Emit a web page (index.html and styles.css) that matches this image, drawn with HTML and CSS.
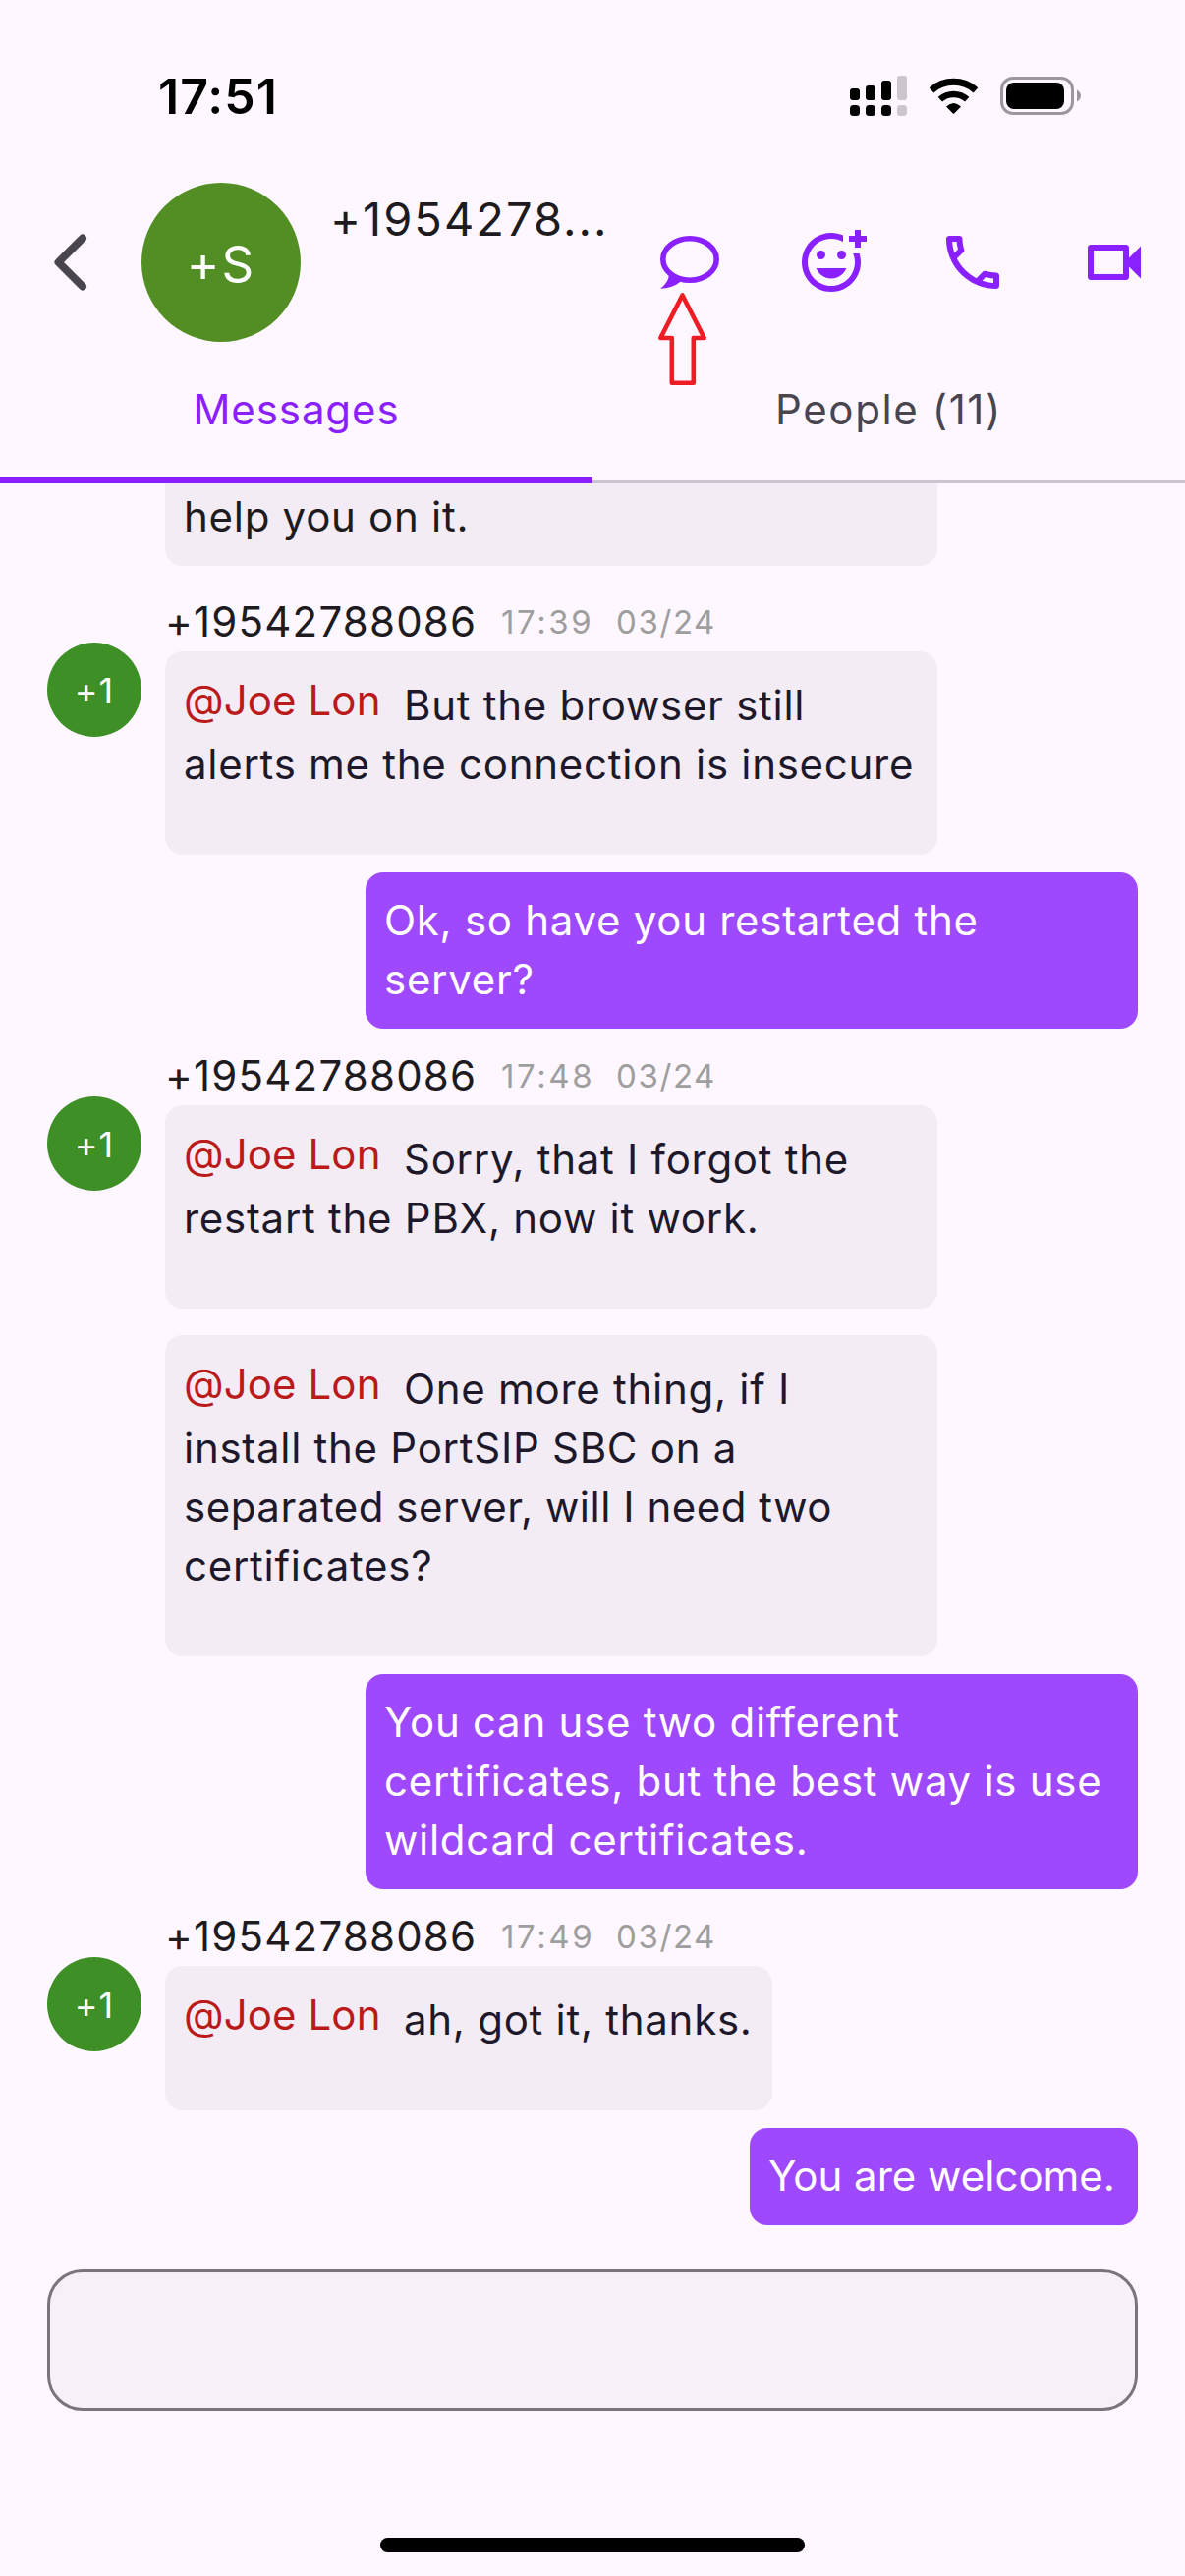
FILE: index.html
```html
<!DOCTYPE html>
<html lang="en">
<head>
<meta charset="utf-8">
<title>Messages</title>
<link rel="stylesheet" href="styles.css">
</head>
<body>
<div class="screen">
  <div class="status-bar">
    <span class="clock">17:51</span>
    <svg class="status-icons" width="236" height="42" viewBox="0 0 236 42">
      <g fill="#000">
        <rect x="0" y="14" width="10" height="12" rx="3"/>
        <rect x="16" y="11" width="10" height="15" rx="3"/>
        <rect x="32" y="6" width="10" height="20" rx="3"/>
        <rect x="0" y="31" width="10" height="11" rx="3.5"/>
        <rect x="16" y="31" width="10" height="11" rx="3.5"/>
        <rect x="32" y="31" width="10" height="11" rx="3.5"/>
      </g>
      <g fill="#cbc5cc">
        <rect x="48" y="1" width="10" height="25" rx="3"/>
        <rect x="48" y="31" width="10" height="11" rx="3.5"/>
      </g>
      <g fill="none" stroke="#000" stroke-width="7">
        <path d="M83 15.800A34 34 0 0 1 128 15.800"/>
        <path d="M91.800 25.200A20.500 20.500 0 0 1 119.200 25.200" stroke-width="6.500"/>
      </g>
      <path d="M98 32.500Q105.500 25.500 113 32.500L106.200 39.400Q105.500 40 104.800 39.400Z"/>
      <rect x="154.500" y="3.500" width="72" height="36" rx="11.500" fill="none" stroke="#9c969e" stroke-width="3"/>
      <rect x="159" y="8" width="59" height="27" rx="8"/>
      <path d="M231 15.500Q235 18 235 21.500T231 27.500Z" fill="#9c969e"/>
    </svg>
  </div>

  <header class="header">
    <svg class="back" width="36" height="60" viewBox="0 0 36 60"><path d="M31 5.500L6.500 30L31 54.500" fill="none" stroke="#49454f" stroke-width="8" stroke-linecap="round" stroke-linejoin="round"/></svg>
    <div class="avatar avatar-lg">+S</div>
    <div class="title">+1954278...</div>
    <div class="actions">
      <div class="action">
        <svg width="72" height="72" viewBox="0 0 72 72"><ellipse cx="36" cy="33" rx="27.200" ry="21.200" fill="none" stroke="#8a20ff" stroke-width="5.600"/><path d="M15 49Q14 57 6 62.800Q18 62.500 27 55.500Z" fill="#8a20ff"/></svg>
        <svg class="pointer" width="53" height="98" viewBox="0 0 53 98"><path d="M26.500 3.500L4.300 47H15.800V92.800H37.800V47H48.700Z" fill="none" stroke="#ee1c24" stroke-width="4.600" stroke-linejoin="round"/></svg>
      </div>
      <svg width="72" height="72" viewBox="0 0 24 24"><path fill="#8a20ff" d="M7 9.500C7 8.670 7.670 8 8.500 8S10 8.670 10 9.500 9.330 11 8.500 11 7 10.330 7 9.500zm5 8c2.330 0 4.310-1.460 5.110-3.500H6.890c.8 2.040 2.780 3.500 5.110 3.500zM15.500 11c.83 0 1.500-.67 1.500-1.500S16.330 8 15.500 8 14 8.670 14 9.500s.67 1.500 1.500 1.500zM22 1h-2v2h-2v2h2v2h2V5h2V3h-2V1zm-2 11c0 4.420-3.580 8-8 8s-8-3.580-8-8 3.580-8 8-8c1.460 0 2.820.4 4 1.080V2.840C14.770 2.300 13.420 2 11.990 2 6.470 2 2 6.480 2 12s4.470 10 9.990 10C17.520 22 22 17.520 22 12c0-1.050-.17-2.050-.47-3h-2.130c.38.93.6 1.940.6 3z"/></svg>
      <svg width="72" height="72" viewBox="0 0 24 24"><path fill="#8a20ff" d="M6.540 5c.06.89.21 1.760.45 2.590l-1.200 1.200c-.41-1.200-.67-2.470-.76-3.790h1.510m9.860 12.020c.85.24 1.720.39 2.600.45v1.490c-1.320-.09-2.590-.35-3.800-.75l1.200-1.190M7.500 3H4c-.55 0-1 .45-1 1 0 9.390 7.610 17 17 17 .55 0 1-.45 1-1v-3.490c0-.55-.45-1-1-1-1.240 0-2.450-.2-3.570-.57-.1-.04-.21-.05-.31-.05-.26 0-.51.1-.71.29l-2.200 2.200c-2.830-1.450-5.150-3.760-6.590-6.590l2.200-2.200c.28-.28.36-.67.25-1.020C8.700 6.450 8.500 5.250 8.500 4c0-.55-.45-1-1-1z"/></svg>
      <svg width="72" height="72" viewBox="0 0 24 24"><path fill="#8a20ff" d="M15 8v8H5V8h10m1-2H4c-.55 0-1 .45-1 1v10c0 .55.45 1 1 1h12c.55 0 1-.45 1-1v-3.500l4 4v-11l-4 4V7c0-.55-.45-1-1-1z"/></svg>
    </div>
  </header>

  <nav class="tabs">
    <div class="tab active">Messages</div>
    <div class="tab">People (11)</div>
  </nav>

  <main class="chat">
    <div class="row first"><div class="bubble in wide">help you on it.</div></div>

    <div class="row group opening">
      <div class="avatar avatar-sm">+1</div>
      <div class="stack">
        <div class="meta"><span class="sender">+19542788086</span><span class="time">17:39</span><span class="date">03/24</span></div>
        <div class="bubble in wide"><span class="mention">@Joe Lon</span>But the browser still<br>alerts me the connection is insecure</div>
      </div>
    </div>

    <div class="row sent"><div class="bubble out wide">Ok, so have you restarted the<br>server?</div></div>

    <div class="row group">
      <div class="avatar avatar-sm">+1</div>
      <div class="stack">
        <div class="meta"><span class="sender">+19542788086</span><span class="time">17:48</span><span class="date">03/24</span></div>
        <div class="bubble in wide"><span class="mention">@Joe Lon</span>Sorry, that I forgot the<br>restart the PBX, now it work.</div>
        <div class="bubble in wide next"><span class="mention">@Joe Lon</span>One more thing, if I<br>install the PortSIP SBC on a<br><span class="tight">separated server, will I need two</span><br>certificates?</div>
      </div>
    </div>

    <div class="row sent"><div class="bubble out wide">You can use two different<br>certificates, but the best way is use<br>wildcard certificates.</div></div>

    <div class="row group">
      <div class="avatar avatar-sm">+1</div>
      <div class="stack">
        <div class="meta"><span class="sender">+19542788086</span><span class="time">17:49</span><span class="date">03/24</span></div>
        <div class="bubble in short"><span class="mention">@Joe Lon</span>ah, got it, thanks.</div>
      </div>
    </div>

    <div class="row sent"><div class="bubble out brief">You are welcome.</div></div>
  </main>

  <div class="composer"></div>
  <div class="home-indicator"></div>
</div>
</body>
</html>
```
FILE: styles.css
```css
* { box-sizing: border-box; }

body {
  margin: 0;
  background: #fef7ff;
  font-family: Inter, "Liberation Sans", sans-serif;
  color: #1d1b20;
}

svg { display: block; flex: none; }

.screen {
  width: 1206px;
  height: 2622px;
  display: flex;
  flex-direction: column;
  overflow: hidden;
}

.status-bar {
  height: 186px;
  flex: none;
  display: flex;
  justify-content: space-between;
  align-items: flex-start;
  padding: 68px 105px 0 161px;
}

.clock {
  font-size: 50px;
  line-height: 60px;
  font-weight: 600;
  color: #000;
  letter-spacing: 1px;
}

.status-icons { margin-top: 8px; }

.header {
  height: 162px;
  flex: none;
  display: flex;
  align-items: center;
  padding: 0 36px 0 53px;
}

.avatar {
  flex: none;
  border-radius: 50%;
  color: #fff;
  display: flex;
  align-items: center;
  justify-content: center;
}

.avatar-lg {
  width: 162px;
  height: 162px;
  margin-left: 55px;
  padding-top: 2px;
  background: #528e23;
  font-size: 51px;
  letter-spacing: 2px;
}

.title {
  align-self: flex-start;
  margin: 8px 0 0 30px;
  width: 300px;
  font-size: 47px;
  line-height: 58px;
  letter-spacing: 2px;
  white-space: nowrap;
}

.actions {
  margin-left: auto;
  display: flex;
  gap: 72px;
}

.action { position: relative; }

.pointer {
  position: absolute;
  left: 2px;
  top: 66px;
}

.tabs {
  height: 144px;
  flex: none;
  display: flex;
}

.tab {
  flex: 1;
  text-align: center;
  padding-top: 44px;
  font-size: 42px;
  line-height: 50px;
  letter-spacing: 1.6px;
  color: #49454f;
  border-bottom: 3px solid #cac4d0;
}

.tab.active {
  color: #8a20ff;
  letter-spacing: 0.9px;
  border-bottom: 6px solid #8a20ff;
}

.chat {
  flex: none;
  height: 1818px;
  padding: 0 48px;
  font-size: 42px;
  line-height: 60px;
}

.row { display: flex; }

.row.first { padding-left: 120px; }

.row.first .bubble {
  height: 84px;
  padding-top: 4px;
  border-radius: 0 0 18px 18px;
  color: #1d1b20;
}

.row.group {
  gap: 24px;
  padding-top: 21px;
}

.row.group.opening { padding-top: 30px; }

.avatar-sm {
  width: 96px;
  height: 96px;
  margin-top: 48px;
  padding-top: 2px;
  background: #3d8f26;
  font-size: 36px;
  letter-spacing: 1px;
}

.row.sent {
  justify-content: flex-end;
  padding-top: 18px;
}

.meta {
  height: 57px;
  line-height: 54px;
  display: flex;
  align-items: flex-start;
  white-space: nowrap;
}

.sender {
  width: 342px;
  letter-spacing: 1.2px;
}

.time,
.date {
  font-size: 33px;
  color: #9e9e9e;
}

.time {
  width: 117px;
  letter-spacing: 2.6px;
}

.date { letter-spacing: 1.6px; }

.bubble {
  border-radius: 18px;
  letter-spacing: 0.72px;
  white-space: nowrap;
}

.bubble.in {
  padding: 25px 18px 62px 19px;
  background: #f3ecf4;
  color: #1d192b;
}

.bubble.out {
  padding: 19px 18px 20px 19px;
  background: #9f49ff;
  color: #fff;
}

.bubble.wide { width: 786px; }
.bubble.short { width: 618px; }

.bubble.brief {
  width: 395px;
  letter-spacing: 0;
}

.bubble.next { margin-top: 27px; }

.tight { letter-spacing: 0.52px; }

.mention {
  display: inline-block;
  width: 224px;
  height: 60px;
  vertical-align: 5px;
  margin: -5px 0;
  color: #ba1a1a;
  letter-spacing: 0.1px;
}

.composer {
  flex: none;
  height: 144px;
  margin: 0 48px;
  border: 3px solid #79747e;
  border-radius: 36px;
  background: #f7f0f8;
}

.home-indicator {
  flex: none;
  width: 432px;
  height: 15px;
  margin: 129px auto 0;
  border-radius: 8px;
  background: #000;
}
```
